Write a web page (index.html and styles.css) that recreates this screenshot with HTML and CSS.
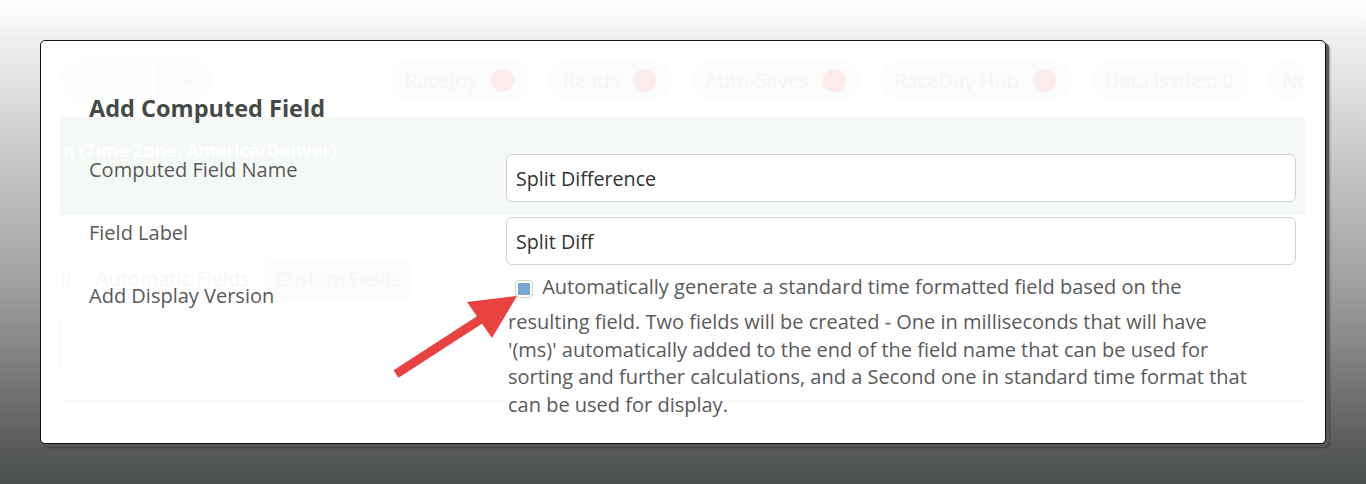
FILE: index.html
```html
<!DOCTYPE html>
<html lang="en">
<head>
<meta charset="utf-8">
<title>Add Computed Field</title>
<link rel="stylesheet" href="styles.css">
</head>
<body>
<div class="stage">
  <div class="modal">
    <div class="ghost" aria-hidden="true">
      <div class="ghost-bar">
        <div class="ghost-split"><span class="ghost-split-main"></span><span class="ghost-chev"></span></div>
        <div class="ghost-pills">
          <span class="pill">RaceJoy <i class="dot"></i></span>
          <span class="pill">Reads <i class="dot"></i></span>
          <span class="pill">Auto-Saves <i class="dot"></i></span>
          <span class="pill">RaceDay Hub <i class="dot"></i></span>
          <span class="pill">Data Issues: 0</span>
          <span class="pill pill-cut">No</span>
        </div>
      </div>
      <div class="ghost-band"><span>n (Time Zone: America/Denver)</span></div>
      <div class="ghost-tabs">
        <span class="tab tab-first">All</span>
        <span class="tab">Automatic Fields</span>
        <span class="tab tab-on">Custom Fields</span>
      </div>
      <div class="ghost-box"></div>
      <div class="ghost-line"></div>
    </div>

    <div class="content">
      <h2 class="title">Add Computed Field</h2>
      <div class="form">
        <label class="lbl">Computed Field Name</label>
        <div class="field"><div class="input">Split Difference</div></div>
        <label class="lbl">Field Label</label>
        <div class="field"><div class="input">Split Diff</div></div>
        <label class="lbl">Add Display Version</label>
        <div class="field">
          <p class="desc"><span class="check"></span> Automatically generate a standard time formatted field based on the resulting field. Two fields will be created - One in milliseconds that will have '(ms)' automatically added to the end of the field name that can be used for sorting and further calculations, and a Second one in standard time format that can be used for display.</p>
        </div>
      </div>
    </div>

    <svg class="arrow" width="140" height="100" viewBox="0 0 140 100" aria-hidden="true">
      <line x1="4" y1="90" x2="89" y2="35" stroke="#ea4141" stroke-width="9"/>
      <polygon points="125,12 75,18 100,54" fill="#ea4141"/>
    </svg>
  </div>
</div>
</body>
</html>
```

FILE: styles.css
```css
html, body {
  margin: 0;
  padding: 0;
}
body {
  width: 1366px;
  height: 484px;
  overflow: hidden;
  font-family: "Open Sans", "Noto Sans", sans-serif;
  background: linear-gradient(to bottom, #ffffff 0px, #efefef 40px, #9a9a9a 300px, #5a5d5c 444px, #4b4f4e 484px);
}
.stage {
  padding: 40px 0 0 40px;
}
.modal {
  position: relative;
  width: 1284px;
  height: 402px;
  background: #fff;
  border: 1px solid #111;
  border-radius: 5px;
  box-shadow: 3px 3px 0 #555a59, 4px 4px 2px rgba(0,0,0,0.35);
  display: grid;
  overflow: hidden;
}
.ghost, .content {
  grid-area: 1 / 1;
}

/* faded page behind the dialog */
.ghost {
  padding: 19px 20px 0 19px;
  display: flex;
  flex-direction: column;
  font-size: 20px;
  color: #f6f6f6;
  min-width: 0;
  overflow: hidden;
}
.ghost-bar {
  display: flex;
  align-items: center;
  height: 40px;
  overflow: hidden;
}
.ghost-split {
  flex: none;
  width: 153px;
  height: 40px;
  border-radius: 20px;
  background: #fdfdfd;
  display: flex;
  align-items: center;
}
.ghost-split-main {
  width: 98px;
  height: 28px;
  border-right: 1px solid #f5f5f5;
}
.ghost-chev {
  margin-left: 24px;
  width: 7px;
  height: 7px;
  border-right: 1px solid #f2f2f2;
  border-bottom: 1px solid #f2f2f2;
  transform: rotate(45deg);
  margin-top: -4px;
}
.ghost-pills {
  margin-left: 177px;
  display: flex;
  gap: 18px;
}
.pill {
  flex: none;
  height: 40px;
  padding: 0 16px 0 15px;
  border-radius: 20px;
  background: #fcfcfc;
  display: flex;
  align-items: center;
  gap: 14px;
  white-space: nowrap;
  color: #f5f5f5;
}
.pill-cut {
  width: 28px;
  padding-right: 0;
  overflow: hidden;
}
.dot {
  width: 23px;
  height: 23px;
  border-radius: 50%;
  background: #fdeaea;
  display: inline-block;
}
.ghost-band {
  margin-top: 17px;
  height: 98px;
  background: #f5f9f6;
  padding-top: 21px;
  box-sizing: border-box;
  overflow: hidden;
}
.ghost-band span {
  display: block;
  margin-left: 3px;
  color: #ffffff;
  font-weight: 700;
  font-size: 17.7px;
}
.ghost-tabs {
  margin-top: 43px;
  display: flex;
  align-items: center;
  height: 42px;
  gap: 5px;
  overflow: hidden;
}
.tab {
  flex: none;
  padding: 0 10px;
  color: #f6f6f6;
  line-height: 42px;
}
.tab-first {
  margin-left: -22px;
}
.tab-on {
  background: #fcfcfc;
  letter-spacing: -0.4px;
}
.ghost-box {
  margin-top: 17px;
  width: 1px;
  height: 53px;
  background: #f8f8f8;
}
.ghost-line {
  margin-top: 30px;
  height: 2px;
  background: #fafafa;
}

/* dialog content */
.content {
  padding: 52px 29px 0 48px;
  color: #595959;
}
.title {
  margin: 0 0 31px;
  font-size: 23.5px;
  font-weight: 700;
  color: #454a49;
  line-height: 30px;
}
.form {
  display: grid;
  grid-template-columns: 417px 1fr;
  row-gap: 15px;
}
.lbl {
  font-size: 20px;
  line-height: 26px;
  padding-top: 3px;
}
.input {
  height: 46px;
  border: 1px solid #d2d2d2;
  border-radius: 6px;
  background: #fff;
  padding: 0 9px;
  display: flex;
  align-items: center;
  font-size: 19.7px;
  color: #333;
}
.desc {
  margin: -7px 0 0;
  padding-left: 2px;
  width: 742px;
  font-size: 20px;
  line-height: 27.5px;
  color: #5a5a5a;
}
.check {
  display: inline-block;
  box-sizing: border-box;
  width: 18px;
  height: 18px;
  padding: 2px;
  border: 1px solid #cfcfcf;
  border-radius: 4px;
  background: #78a7d3;
  background-clip: content-box;
  margin-left: 7px;
  margin-right: 4px;
  margin-bottom: 10px;
  vertical-align: -14px;
}
.arrow {
  position: absolute;
  left: 351px;
  top: 243px;
}
```
